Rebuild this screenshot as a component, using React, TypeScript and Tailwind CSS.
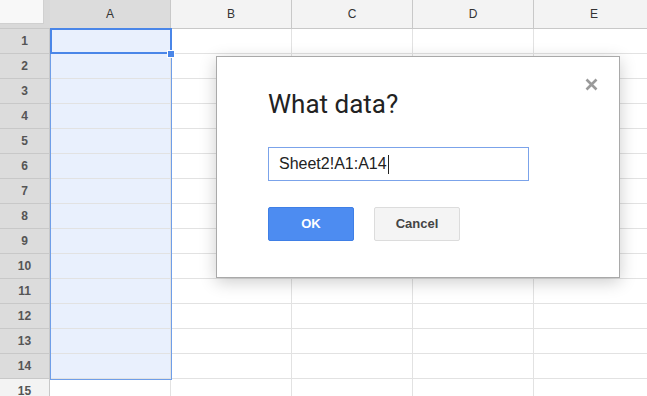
const cols = ["A", "B", "C", "D", "E"];
const rows = Array.from({ length: 15 }, (_, i) => i + 1);

export default function App() {
  return (
    <div className="relative w-[647px] h-[396px] overflow-hidden bg-white font-['Liberation_Sans',Arial,sans-serif]">
      {/* header row */}
      <div className="flex h-[29px]">
        <div className="w-[50px] shrink-0 bg-[#d9d9d9] border-b border-[#c8c8c8]">
          <div className="w-[44px] h-[24px] bg-[#f8f8f8] border-r border-b border-[#d0d0d0]"></div>
        </div>
        {cols.map((c) => (
          <div
            key={c}
            className={
              "w-[121px] shrink-0 flex items-center justify-center text-[12px] text-[#333] border-r border-b border-[#c8c8c8] " +
              (c === "A" ? "bg-[#dcdcdc]" : "bg-[#f3f3f3]")
            }
          >
            {c}
          </div>
        ))}
      </div>

      {rows.map((r) => (
        <div key={r} className="flex h-[25px]">
          <div
            className={
              "w-[50px] shrink-0 flex items-center justify-center text-[12px] font-bold text-[#555] border-r border-b border-[#c8c8c8] " +
              (r <= 14 ? "bg-[#dcdcdc]" : "bg-[#f3f3f3]")
            }
          >
            {r}
          </div>
          {cols.map((c) => (
            <div
              key={c}
              className={
                "w-[121px] shrink-0 border-r border-b border-[#e2e2e2] " +
                (c === "A" && r <= 14 ? "bg-[#e9f0fd]" : "bg-white")
              }
            ></div>
          ))}
        </div>
      ))}

      {/* selected range */}
      <div className="absolute left-[50px] top-[28px] w-[122px] h-[352px] border border-[#6f9ee8]"></div>
      <div className="absolute left-[50px] top-[28px] w-[122px] h-[26px] border-2 border-[#4a86e8]"></div>
      <div className="absolute left-[167px] top-[50px] w-[8px] h-[8px] bg-[#4a86e8] border border-white"></div>

      {/* dialog */}
      <div className="absolute left-[216px] top-[56px] w-[404px] h-[222px] bg-white border border-[#a9a9a9] shadow-[0_4px_16px_rgba(0,0,0,0.2)] pl-[51px] pt-[29px]">
        <button className="absolute right-[21px] top-[20px] w-[14px] h-[14px] flex items-center justify-center">
          <svg width="13" height="13" viewBox="0 0 13 13">
            <path d="M1.5 1.5 L11.5 11.5 M11.5 1.5 L1.5 11.5" stroke="#9a9a9a" strokeWidth="2.6" />
          </svg>
        </button>
        <h2 className="text-[26px] leading-[36px] text-[#222] font-['Roboto',Arial,sans-serif]">What data?</h2>
        <div className="mt-[25px] w-[261px] h-[34px] border border-[#7ba3ea] flex items-center pl-[10px] text-[16px] text-[#222]">
          Sheet2!A1:A14
          <span className="ml-[1px] w-[1px] h-[19px] bg-[#222]"></span>
        </div>
        <div className="flex gap-[20px] mt-[26px]">
          <button className="w-[86px] h-[34px] rounded-[2px] bg-[#4d8cf1] border border-[#3f7fe6] text-white text-[13px] font-bold">
            OK
          </button>
          <button className="w-[86px] h-[34px] rounded-[2px] bg-[#f4f4f4] border border-[#dcdcdc] text-[#444] text-[13px] font-bold">
            Cancel
          </button>
        </div>
      </div>
    </div>
  );
}
